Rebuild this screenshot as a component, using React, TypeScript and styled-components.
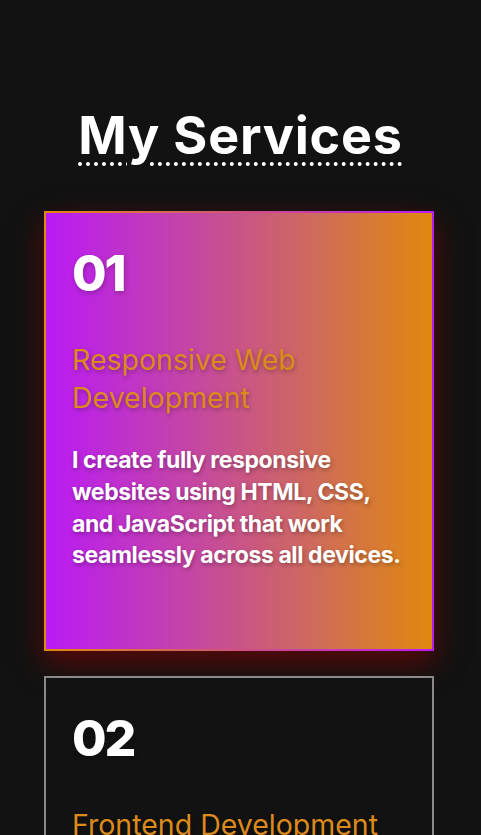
import React from "react";
import styled, { createGlobalStyle } from "styled-components";

const Global = createGlobalStyle`
  html, body { margin: 0; padding: 0; background: #121212; }
  body { font-family: "Inter", "Noto Sans", sans-serif; color: #fff; overflow: hidden; }
  * { box-sizing: border-box; }
`;

const Section = styled.section`
  width: 481px;
  height: 835px;
  overflow: hidden;
  padding: 107px 0 0 44px;
  display: flex;
  flex-direction: column;
`;

const Title = styled.h2`
  margin: 0 0 47px -44px;
  width: 481px;
  text-align: center;
  font-size: 52px;
  font-weight: 700;
  letter-spacing: 0.8px;
  line-height: 1.1;
  color: #fff;
  text-decoration: underline dotted #fff;
  text-decoration-thickness: 4px;
  text-underline-offset: 8px;
`;

const List = styled.div`
  display: flex;
  flex-direction: column;
  gap: 25px;
`;

const Card = styled.article<{ $active?: boolean }>`
  width: 390px;
  padding: 30px 24px 77px 26px;
  display: flex;
  flex-direction: column;
  border: 2px solid #8a8a8a;
  background: #121212;
  ${(p) =>
    p.$active &&
    `
    border-image: linear-gradient(to right, #e08a0c, #b81cf5) 1;
    background: linear-gradient(to right, #b91af6 0%, #c443aa 35%, #cf6b5a 70%, #e0880e 100%);
    box-shadow: 0 12px 28px rgba(150, 0, 0, 0.55);
  `}
`;

const Num = styled.div`
  font-size: 50px;
  font-weight: 800;
  letter-spacing: -2px;
  line-height: 60px;
  color: #fff;
  text-shadow: 1px 2px 5px rgba(0, 0, 0, 0.25);
  margin-bottom: 38px;
`;

const Heading = styled.h3`
  margin: 0 0 28px;
  font-size: 28.5px;
  font-weight: 400;
  line-height: 38px;
  color: #dc8a1c;
  text-shadow: 1px 2px 4px rgba(0, 0, 0, 0.3);
`;

const Desc = styled.p`
  margin: 0;
  font-size: 23px;
  font-weight: 700;
  letter-spacing: -0.4px;
  line-height: 31.7px;
  color: #fff;
  text-shadow: 1px 2px 4px rgba(0, 0, 0, 0.3);
`;

const services = [
  {
    n: "01",
    title: "Responsive Web Development",
    desc: "I create fully responsive websites using HTML, CSS, and JavaScript that work seamlessly across all devices.",
  },
  {
    n: "02",
    title: "Frontend Development",
    desc: "I build interactive and dynamic user interfaces using modern frontend technologies and frameworks.",
  },
];

export default function App() {
  return (
    <>
      <Global />
      <Section>
        <Title>My Services</Title>
        <List>
          {services.map((s, i) => (
            <Card key={s.n} $active={i === 0}>
              <Num>{s.n}</Num>
              <Heading>{s.title}</Heading>
              <Desc>{s.desc}</Desc>
            </Card>
          ))}
        </List>
      </Section>
    </>
  );
}
